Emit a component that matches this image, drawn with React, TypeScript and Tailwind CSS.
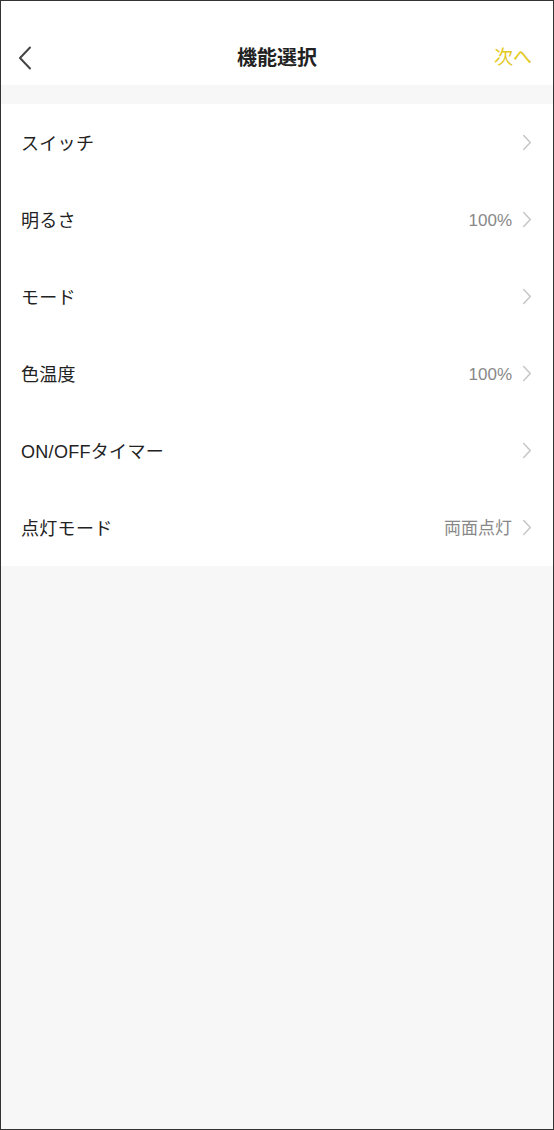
const rows: { label: string; value?: string }[] = [
  { label: 'スイッチ' },
  { label: '明るさ', value: '100%' },
  { label: 'モード' },
  { label: '色温度', value: '100%' },
  { label: 'ON/OFFタイマー' },
  { label: '点灯モード', value: '両面点灯' }
]

function Chevron({ className }: { className?: string }) {
  return (
    <svg viewBox="0 0 10 18" className={className} fill="none" stroke="currentColor" strokeWidth="1.5" strokeLinecap="round" strokeLinejoin="round">
      <path d="M1.5 1.5 8.5 9l-7 7.5" />
    </svg>
  )
}

export default function App() {
  return (
    <div
      className="flex h-[1130px] w-[554px] flex-col border border-[#333] bg-[#f7f7f7]"
      style={{ fontFamily: '"Liberation Sans", "Noto Sans CJK JP", sans-serif' }}
    >
      <header className="relative flex h-[84px] items-center justify-center bg-white pt-[30px]">
        <svg viewBox="0 0 14 24" className="absolute left-[17px] top-[45px] h-[24px] w-[14px] text-[#444]" fill="none" stroke="currentColor" strokeWidth="2" strokeLinecap="round" strokeLinejoin="round">
          <path d="M12 1.5 2 12l10 10.5" />
        </svg>
        <h1 className="text-[20px] font-bold text-[#222]">機能選択</h1>
        <span className="absolute right-[21px] top-[43px] text-[19px] text-[#e2c91e]">次へ</span>
      </header>
      <div className="h-[19px]" />
      <ul className="bg-white">
        {rows.map((row) => (
          <li key={row.label} className="flex h-[77px] items-center justify-between pl-[20px] pr-[21px]">
            <span className="pt-[3px] text-[18px] tracking-[0.3px] text-[#222]">{row.label}</span>
            <span className="flex items-center gap-[10px]">
              {row.value && <span className="pt-[2px] text-[17px] text-[#888]">{row.value}</span>}
              <Chevron className="h-[17px] w-[10px] text-[#c4c4c4]" />
            </span>
          </li>
        ))}
      </ul>
    </div>
  )
}
